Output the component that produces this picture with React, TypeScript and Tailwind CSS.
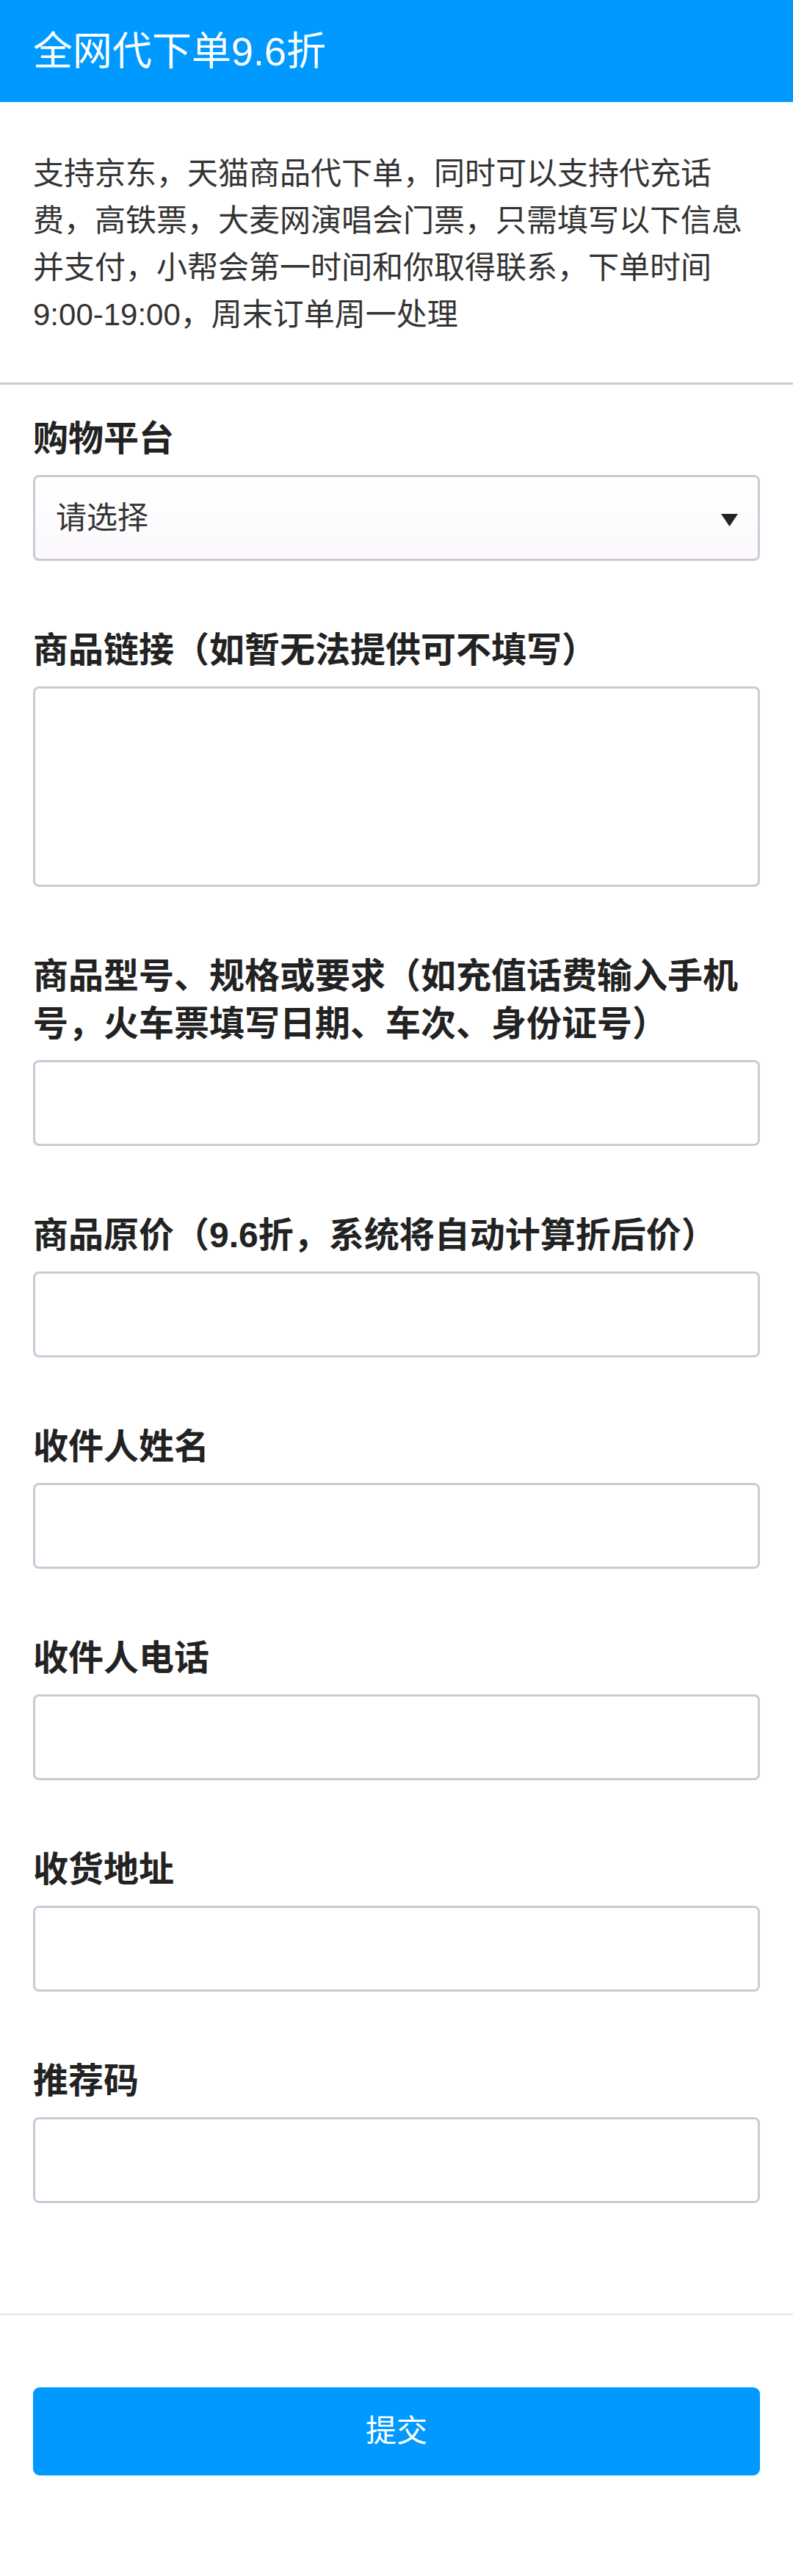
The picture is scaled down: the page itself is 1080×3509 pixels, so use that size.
import React from "react";

const FONT = { fontFamily: '"Liberation Sans", "Noto Sans CJK SC", sans-serif' };

function Field({ label, children }: { label: string; children: React.ReactNode }) {
  return (
    <div className="mt-[89px] first:mt-[41px]">
      <div className="text-[48px] leading-[65px] font-bold text-[#222]">{label}</div>
      <div className="mt-[17px]">{children}</div>
    </div>
  );
}

function TextInput() {
  return (
    <input
      type="text"
      className="block w-full h-[117px] border-[3px] border-[#c9cbd6] rounded-[8px] bg-white px-[28px] text-[42px] text-[#333] outline-none"
    />
  );
}

export default function App() {
  return (
    <div className="w-[1080px] min-h-[3509px] bg-white" style={FONT}>
      <header className="h-[139px] bg-[#0099ff] px-[45px] flex items-center">
        <h1 className="text-[54px] font-normal text-white leading-none">全网代下单9.6折</h1>
      </header>

      <section className="px-[45px] pt-[66px] pb-[60px] border-b-[3px] border-[#c9ccd6]">
        <p className="text-[42px] leading-[64px] text-[#333]">
          支持京东，天猫商品代下单，同时可以支持代充话费，高铁票，大麦网演唱会门票，只需填写以下信息并支付，小帮会第一时间和你取得联系，下单时间9:00-19:00，周末订单周一处理
        </p>
      </section>

      <form className="px-[45px]" onSubmit={(e) => e.preventDefault()}>
        <Field label="购物平台">
          <div className="flex items-center justify-between w-full h-[117px] border-[3px] border-[#c9cbd6] rounded-[8px] bg-gradient-to-b from-white to-[#fcf8fd] pl-[28px] pr-[27px]">
            <span className="text-[42px] text-[#333] leading-none">请选择</span>
            <svg width="23" height="17" viewBox="0 0 23 17" className="mt-[6px]">
              <polygon points="0,0 23,0 11.5,17" fill="#222" />
            </svg>
          </div>
        </Field>
        <Field label="商品链接（如暂无法提供可不填写）">
          <textarea className="block w-full h-[273px] border-[3px] border-[#c9cbd6] rounded-[8px] bg-white p-[28px] text-[42px] text-[#333] outline-none resize-none" />
        </Field>
        <Field label="商品型号、规格或要求（如充值话费输入手机号，火车票填写日期、车次、身份证号）">
          <TextInput />
        </Field>
        <Field label="商品原价（9.6折，系统将自动计算折后价）">
          <TextInput />
        </Field>
        <Field label="收件人姓名">
          <TextInput />
        </Field>
        <Field label="收件人电话">
          <TextInput />
        </Field>
        <Field label="收货地址">
          <TextInput />
        </Field>
        <Field label="推荐码">
          <TextInput />
        </Field>

        <div className="mt-[150px] -mx-[45px] border-t-[3px] border-[#efe9eb]" />

        <button
          type="submit"
          className="mt-[98px] w-full h-[120px] rounded-[9px] bg-[#0099ff] text-white text-[42px] leading-none"
        >
          提交
        </button>
      </form>
    </div>
  );
}
